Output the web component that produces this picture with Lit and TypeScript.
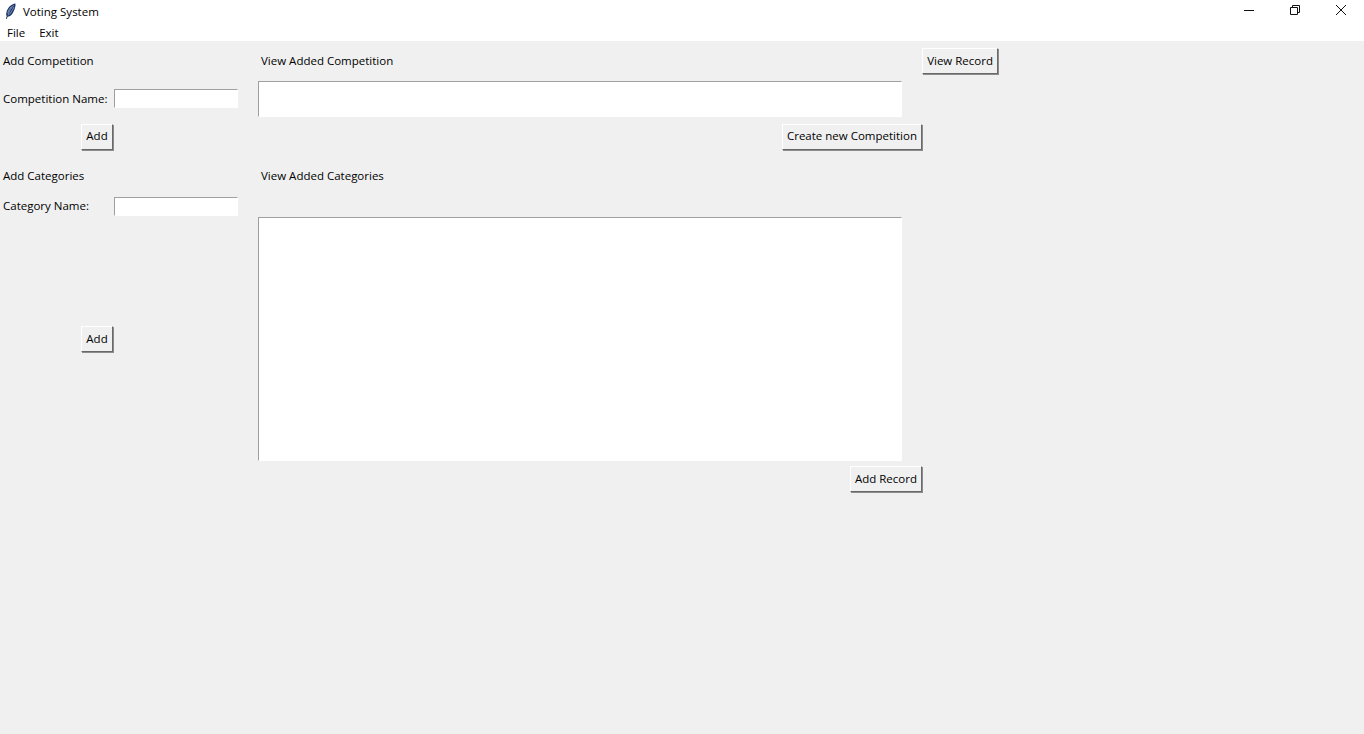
import { LitElement, html, css } from "lit";
import { customElement } from "lit/decorators.js";

@customElement("app-root")
export class AppRoot extends LitElement {
  static styles = css`
    :host {
      display: flex;
      flex-direction: column;
      height: 734px;
      overflow: hidden;
      background: #f0f0f0;
      color: #000;
      font: 11.5px/16px "Open Sans", "Noto Sans", sans-serif;
    }
    .titlebar {
      height: 22px;
      background: #fff;
      display: flex;
      align-items: center;
      flex: none;
    }
    .logo { margin-left: 5px; width: 11px; height: 16px; flex: none; }
    .title { margin-left: 7px; flex: 1; padding-top: 2px; }
    .winbtns { display: flex; align-items: center; padding-bottom: 2px; }
    .winbtn { width: 46px; height: 20px; display: flex; justify-content: center; align-items: center; }
    .menubar {
      box-sizing: border-box;
      height: 19px;
      background: #fff;
      display: flex;
      align-items: center;
      gap: 14px;
      padding: 2px 0 0 7px;
      flex: none;
    }
    .form {
      display: grid;
      grid-template-columns: 114px 144px 664px 76px;
      grid-template-rows: 40px 36px 39px 40px 21px 244px 36px;
      justify-content: start;
    }
    .lbl { align-self: center; padding: 0 0 1px 3px; white-space: nowrap; }
    .entry {
      box-sizing: border-box;
      width: 124px;
      height: 19px;
      margin-top: 8px;
      background: #fff;
      border: 1px solid #fff;
      border-top-color: #a0a0a0;
      border-left-color: #a0a0a0;
      align-self: start;
    }
    .entry2 { margin-top: 1px; }
    .text {
      box-sizing: border-box;
      width: 644px;
      background: #fff;
      border: 1px solid #fff;
      border-top-color: #a0a0a0;
      border-left-color: #a0a0a0;
    }
    button {
      box-sizing: border-box;
      height: 26px;
      padding: 0 4px 1px;
      margin: 0;
      font: inherit;
      color: inherit;
      background: #f0f0f0;
      border: 1px solid;
      border-color: #fff #696969 #696969 #fff;
      box-shadow: 1px 1px 0 #8c8c8c;
      white-space: nowrap;
      align-self: center;
      justify-self: end;
    }
    .add { width: 32px; margin-right: 1px; }
  `;

  render() {
    return html`
      <div class="titlebar">
        <svg class="logo" viewBox="0 0 11 16">
          <path d="M10.4 .4C6.4 .8 2.6 4.6 1.5 9 1 11 1.1 12.4 1.7 13.2L.9 15.7l.9.2.8-2.2C5.2 13.6 7.8 11 9.2 7.2 10.2 4.6 10.8 2.2 10.4 .4Z" fill="#1c3568" />
          <path d="M8.8 2.2C6.2 4.6 4.2 8 3 12.4M6.4 3.6C4.8 5.4 3.4 7.6 2.6 10M9 4C7.8 6.6 6.4 9 4.6 11.4" stroke="#a8bcdc" stroke-width=".7" fill="none" />
        </svg>
        <span class="title">Voting System</span>
        <div class="winbtns">
          <div class="winbtn">
            <svg width="10" height="10" viewBox="0 0 10 10"><path d="M0 5.5H10" stroke="#111" /></svg>
          </div>
          <div class="winbtn">
            <svg width="10" height="10" viewBox="0 0 10 10" fill="none" stroke="#111">
              <path d="M.5 2.5h7v7h-7zM2.5 2.5v-2h7v7h-2" />
            </svg>
          </div>
          <div class="winbtn">
            <svg width="10" height="10" viewBox="0 0 10 10"><path d="M0 0L10 10M10 0L0 10" stroke="#111" /></svg>
          </div>
        </div>
      </div>
      <div class="menubar"><span>File</span><span>Exit</span></div>
      <div class="form">
        <span class="lbl">Add Competition</span>
        <span></span>
        <span class="lbl">View Added Competition</span>
        <button>View Record</button>

        <span class="lbl">Competition Name:</span>
        <div class="entry"></div>
        <div class="text"></div>
        <span></span>

        <button class="add">Add</button>
        <span></span>
        <button>Create new Competition</button>
        <span></span>

        <span class="lbl">Add Categories</span>
        <span></span>
        <span class="lbl">View Added Categories</span>
        <span></span>

        <span class="lbl">Category Name:</span>
        <div class="entry entry2"></div>
        <span></span>
        <span></span>

        <button class="add">Add</button>
        <span></span>
        <div class="text"></div>
        <span></span>

        <span></span>
        <span></span>
        <button>Add Record</button>
        <span></span>
      </div>
    `;
  }
}
